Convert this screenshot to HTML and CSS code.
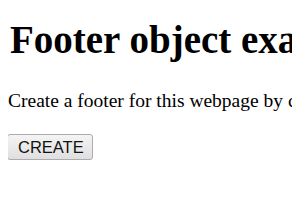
FILE: index.html
```html
<!DOCTYPE html>
<html>
<head>
<meta charset="utf-8">
<link rel="stylesheet" href="styles.css">
</head>
<body>
<h1 class="title">Footer object example</h1>
<p class="intro">Create a footer for this webpage by clicking the button below.</p>
<div class="actions">
  <button class="create-btn">CREATE</button>
</div>
</body>
</html>
```
FILE: styles.css
```css
html, body {
  margin: 0;
  padding: 0;
  background: #fff;
  overflow: hidden;
}
body {
  margin: 8px;
  font-family: "Liberation Serif", "Times New Roman", serif;
  font-size: 19.5px;
  color: #000;
  white-space: nowrap;
}
.title {
  font-size: 39px;
  line-height: 44px;
  font-weight: bold;
  margin: 10px 0 28px;
  padding-left: 2px;
}
.intro {
  margin: 0;
  line-height: 22px;
}
.actions {
  display: flex;
  margin: 22px 0 0 -1px;
}
.create-btn {
  font-family: "Liberation Sans", Arial, sans-serif;
  font-size: 16.5px;
  color: #111;
  padding: 0 10px;
  width: 86px;
  height: 26px;
  line-height: 24px;
  border: 1px solid #acacac;
  border-radius: 3px;
  background: linear-gradient(#f4f4f4, #dfdfdf);
}
```
